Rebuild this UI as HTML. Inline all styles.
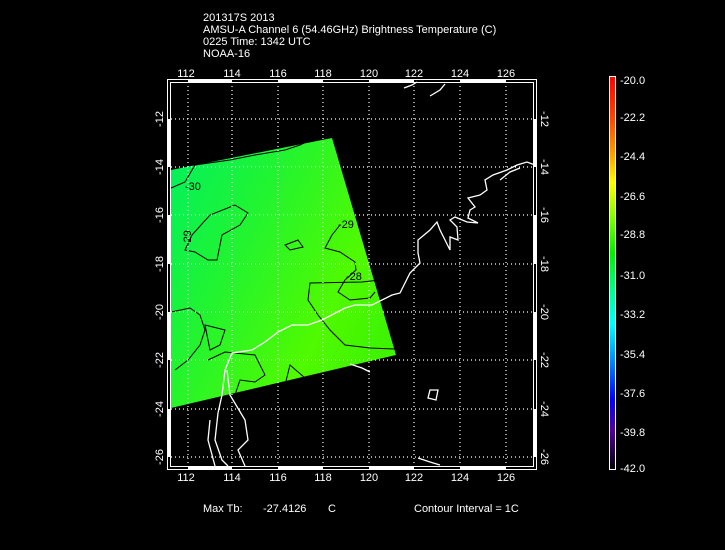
<!DOCTYPE html>
<html><head><meta charset="utf-8"><style>
html,body{margin:0;padding:0;background:#000;width:725px;height:550px;overflow:hidden}
svg{display:block}
text{font-family:"Liberation Sans",sans-serif;font-size:11px;fill:#fff}
</style></head><body>
<svg width="725" height="550" viewBox="0 0 725 550" xmlns="http://www.w3.org/2000/svg">
<defs>
<linearGradient id="g1" x1="0" y1="0" x2="1" y2="0.6">
<stop offset="0" stop-color="#00f060"/>
<stop offset="0.4" stop-color="#22f430"/>
<stop offset="0.8" stop-color="#50fa00"/>
<stop offset="1" stop-color="#40f400"/>
</linearGradient>
<linearGradient id="cb" x1="0" y1="0" x2="0" y2="1">
<stop offset="0" stop-color="#ff0000"/>
<stop offset="0.1" stop-color="#ff4000"/>
<stop offset="0.2" stop-color="#ffa000"/>
<stop offset="0.27" stop-color="#ffff00"/>
<stop offset="0.36" stop-color="#80ff00"/>
<stop offset="0.45" stop-color="#00f000"/>
<stop offset="0.55" stop-color="#00ff90"/>
<stop offset="0.63" stop-color="#00ffff"/>
<stop offset="0.73" stop-color="#0080ff"/>
<stop offset="0.82" stop-color="#0000ff"/>
<stop offset="0.9" stop-color="#5000a0"/>
<stop offset="1" stop-color="#000000"/>
</linearGradient>
</defs>
<text x="203" y="21">201317S 2013</text>
<text x="203" y="33">AMSU-A Channel 6 (54.46GHz) Brightness Temperature (C)</text>
<text x="203" y="45">0225 Time: 1342 UTC</text>
<text x="203" y="57">NOAA-16</text>

<polygon points="171,170 332,138 396,355 171,408" fill="url(#g1)"/>
<g fill="none" stroke="#000" stroke-width="1">
<path d="M171,188 L185,182 L195,165 L230,160 L255,155 L285,150 L300,145 L310,140"/>
<path d="M192,235 L210,215 L235,205 L248,213 L240,225 L222,235 L217,260 L208,260 L195,252 L185,250 Z"/>
<path d="M285,245 L298,240 L303,247 L290,250 Z"/>
<path d="M340,225 L332,235 L325,248 L340,252 L355,262 L356,270 L345,280 L338,292 L350,300 L370,298 L375,292"/>
<path d="M380,280 L362,282 L310,283 L308,300 L318,315 L330,330 L345,345 L370,348 L395,349"/>
<path d="M171,312 L190,308 L200,315 L205,330 L200,345 L188,360 L175,370"/>
<path d="M205,325 L225,330 L220,345 L210,350 Z"/>
<path d="M208,360 L225,352 L255,355 L265,375 L255,382 L240,380 L235,395"/>
<path d="M290,365 L285,385 L295,392 L305,378 Z"/>
</g>
<g font-size="10">
<text x="185" y="190" style="fill:#000">-30</text>
<text x="180" y="245" style="fill:#000" transform="rotate(-90 186 240)">-29</text>
<text x="338" y="228" style="fill:#000">-29</text>
<text x="346" y="280" style="fill:#000">-28</text>
</g>

<g stroke="#fff" stroke-width="1.2" stroke-dasharray="1,3">
<line x1="188" y1="82" x2="188" y2="466"/><line x1="232" y1="82" x2="232" y2="466"/>
<line x1="278" y1="82" x2="278" y2="466"/><line x1="323" y1="82" x2="323" y2="466"/>
<line x1="369" y1="82" x2="369" y2="466"/><line x1="414" y1="82" x2="414" y2="466"/>
<line x1="460" y1="82" x2="460" y2="466"/><line x1="506" y1="82" x2="506" y2="466"/>
<line x1="171" y1="119" x2="533" y2="119"/><line x1="171" y1="167" x2="533" y2="167"/>
<line x1="171" y1="215" x2="533" y2="215"/><line x1="171" y1="264" x2="533" y2="264"/>
<line x1="171" y1="312" x2="533" y2="312"/><line x1="171" y1="360" x2="533" y2="360"/>
<line x1="171" y1="409" x2="533" y2="409"/><line x1="171" y1="457" x2="533" y2="457"/>
</g>

<g fill="none" stroke="#fff" stroke-width="1.3">
<path d="M218,413 L222,395 L225,370 L232,353 L252,350 L265,342 L278,332 L292,325 L308,325 L322,320 L345,308 L355,305 L372,305 L392,295 L400,293 L410,273 L420,263 L418,253 L418,240 L430,230 L437,222 L440,230 L450,250 L450,237 L458,240 L457,227 L450,220 L455,217 L467,222 L478,223 L468,218 L470,210 L475,207 L468,198 L480,195 L487,190 L485,180 L493,175 L507,170 L517,165 L527,162 L535,165"/>
<path d="M218,413 L215,440 L222,460 L228,466"/>
<path d="M227,370 L230,395 L245,420 L248,440 L238,450 L245,466"/>
<path d="M210,420 L208,440 L215,466"/>
<path d="M430,390 L428,398 L436,400 L438,390 Z"/>
<path d="M418,458 L430,462 L440,465"/>
<path d="M404,88 L412,85 L417,82"/>
<path d="M430,96 L440,90 L445,84"/>
<path d="M350,364 L362,368 L370,372"/>
<path d="M500,180 L510,172 L520,168"/>
</g>

<g fill="none" stroke="#fff">
<rect x="167.5" y="79.5" width="369" height="390"/>
<rect x="170.5" y="82.5" width="363" height="384"/>
</g>
<g fill="#fff">
<rect x="188" y="80" width="44" height="3"/><rect x="278" y="80" width="45" height="3"/><rect x="369" y="80" width="45" height="3"/><rect x="460" y="80" width="46" height="3"/>
<rect x="188" y="466" width="44" height="3"/><rect x="278" y="466" width="45" height="3"/><rect x="369" y="466" width="45" height="3"/><rect x="460" y="466" width="46" height="3"/>
<rect x="168" y="119" width="3" height="48"/><rect x="168" y="215" width="3" height="49"/><rect x="168" y="312" width="3" height="48"/><rect x="168" y="409" width="3" height="48"/>
<rect x="534" y="119" width="3" height="48"/><rect x="534" y="215" width="3" height="49"/><rect x="534" y="312" width="3" height="48"/><rect x="534" y="409" width="3" height="48"/>
</g>

<g text-anchor="middle">
<text x="186" y="77">112</text><text x="232" y="77">114</text><text x="278" y="77">116</text><text x="323" y="77">118</text>
<text x="369" y="77">120</text><text x="414" y="77">122</text><text x="460" y="77">124</text><text x="506" y="77">126</text>
<text x="186" y="481">112</text><text x="232" y="481">114</text><text x="278" y="481">116</text><text x="323" y="481">118</text>
<text x="369" y="481">120</text><text x="414" y="481">122</text><text x="460" y="481">124</text><text x="506" y="481">126</text>
<text transform="translate(163 119) rotate(-90)">-12</text><text transform="translate(163 167) rotate(-90)">-14</text>
<text transform="translate(163 215) rotate(-90)">-16</text><text transform="translate(163 264) rotate(-90)">-18</text>
<text transform="translate(163 312) rotate(-90)">-20</text><text transform="translate(163 360) rotate(-90)">-22</text>
<text transform="translate(163 409) rotate(-90)">-24</text><text transform="translate(163 457) rotate(-90)">-26</text>
<text transform="translate(541 119) rotate(90)">-12</text><text transform="translate(541 167) rotate(90)">-14</text>
<text transform="translate(541 215) rotate(90)">-16</text><text transform="translate(541 264) rotate(90)">-18</text>
<text transform="translate(541 312) rotate(90)">-20</text><text transform="translate(541 360) rotate(90)">-22</text>
<text transform="translate(541 409) rotate(90)">-24</text><text transform="translate(541 457) rotate(90)">-26</text>
</g>

<text x="203" y="512">Max Tb:</text>
<text x="263" y="512">-27.4126</text>
<text x="328" y="512">C</text>
<text x="414" y="512">Contour Interval = 1C</text>

<rect x="609.5" y="76.5" width="6" height="393" fill="url(#cb)" stroke="#fff"/>
<g>
<text x="620" y="84">-20.0</text><text x="620" y="121">-22.2</text><text x="620" y="160">-24.4</text>
<text x="620" y="200">-26.6</text><text x="620" y="238">-28.8</text><text x="620" y="279">-31.0</text>
<text x="620" y="318">-33.2</text><text x="620" y="358">-35.4</text><text x="620" y="397">-37.6</text>
<text x="620" y="436">-39.8</text><text x="620" y="472">-42.0</text>
</g>
</svg>
</body></html>
